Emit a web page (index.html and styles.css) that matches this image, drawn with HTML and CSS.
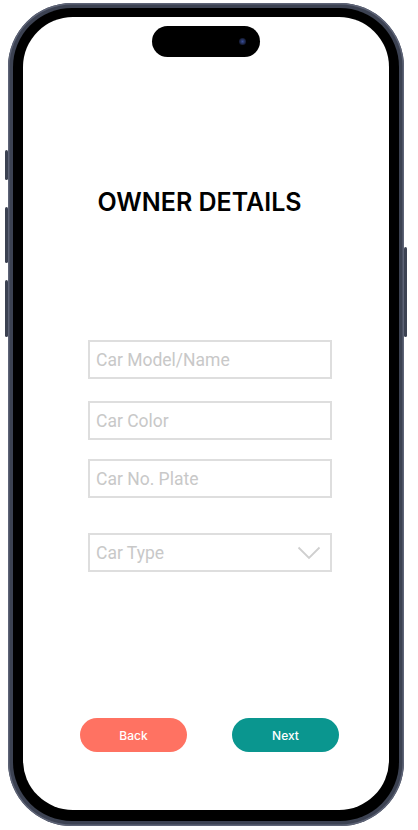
FILE: index.html
```html
<!DOCTYPE html>
<html lang="en">
<head>
    <meta charset="UTF-8">
    <meta name="viewport" content="width=device-width, initial-scale=1.0">
    <title>Owner Details</title>
    <link rel="stylesheet" href="styles.css">
</head>
<body>

<div class="phone">
    <span class="side-btn left-1"></span>
    <span class="side-btn left-2"></span>
    <span class="side-btn left-3"></span>
    <span class="side-btn right-1"></span>

    <div class="bezel">
        <div class="screen">
            <div class="island"><span class="camera"></span></div>

            <h1>OWNER DETAILS</h1>

            <form class="car-form">
                <input type="text" class="field" placeholder="Car Model/Name">
                <input type="text" class="field field-color" placeholder="Car Color">
                <input type="text" class="field field-plate" placeholder="Car No. Plate">

                <div class="select-wrap">
                    <select class="field">
                        <option>Car Type</option>
                        <option>Sedan</option>
                        <option>SUV</option>
                        <option>Hatchback</option>
                    </select>
                    <svg class="chevron" width="24" height="14" viewBox="0 0 24 14">
                        <path d="M1.5 1.5 L12 12 L22.5 1.5" fill="none" stroke="#cfcfcf" stroke-width="1.8"/>
                    </svg>
                </div>

                <div class="actions">
                    <button type="button" class="btn btn-back">Back</button>
                    <button type="submit" class="btn btn-next">Next</button>
                </div>
            </form>
        </div>
    </div>
</div>

</body>
</html>
```

FILE: styles.css
```css
body { margin: 0; background: #fff; font-family: Inter, "Liberation Sans", sans-serif; }

/* device frame */
.phone {
    position: relative;
    width: 396px;
    height: 823px;
    margin: 3px 0 0 8px;
    padding: 5px;
    box-sizing: border-box;
    border-radius: 64px;
    background: #3c4252;
    box-shadow: inset 0 0 0 1.5px #5d6376;
}
.bezel {
    height: 100%;
    padding: 9px 10px 11px 10px;
    box-sizing: border-box;
    border-radius: 59px;
    background: #000;
}
.screen {
    height: 100%;
    border-radius: 50px;
    background: #fff;
    overflow: hidden;
    display: flex;
    flex-direction: column;
}

.side-btn { position: absolute; width: 3px; background: #3c4252; border-radius: 2px; }
.left-1 { left: -3px; top: 147px; height: 30px; }
.left-2 { left: -3px; top: 204px; height: 56px; }
.left-3 { left: -3px; top: 277px; height: 57px; }
.right-1 { right: -3px; top: 244px; height: 90px; }

.island {
    position: relative;
    align-self: center;
    width: 108px;
    height: 31px;
    margin-top: 9px;
    border-radius: 16px;
    background: #000;
}
.camera {
    position: absolute;
    left: 87px;
    top: 12px;
    width: 7px;
    height: 7px;
    border-radius: 50%;
    background: radial-gradient(circle, #3a4f9a 0, #18203d 60%, #0b0e1a 100%);
}

h1 {
    margin: 133px 13px 0 0;
    font-family: Inter, "Liberation Sans", sans-serif;
    font-size: 25px;
    line-height: 24px;
    font-weight: 600;
    text-align: center;
    color: #000;
}

/* form */
.car-form { display: flex; flex-direction: column; margin-top: 126px; }
.field {
    display: block;
    width: 244px;
    height: 39px;
    margin-left: 65px;
    padding: 0 6px;
    box-sizing: border-box;
    border: 2px solid #dedede;
    border-radius: 0;
    background: #fff;
    font-family: Roboto, "Liberation Sans", sans-serif;
    font-size: 17.5px;
    font-weight: 400;
    color: #555;
    outline: none;
}
.field::placeholder { color: #c8c8c8; }
.field-color { margin-top: 22px; }
.field-plate { margin-top: 19px; }

.select-wrap { position: relative; margin-top: 35px; }
.select-wrap select { appearance: none; -webkit-appearance: none; color: #c8c8c8; }
.chevron { position: absolute; left: 274px; top: 13px; pointer-events: none; }

.actions { display: flex; gap: 45px; margin: 146px 0 0 57px; }
.btn {
    width: 107px;
    height: 34px;
    border: none;
    border-radius: 17px;
    color: #fff;
    font-family: Inter, "Liberation Sans", sans-serif;
    font-size: 12px;
    font-weight: 500;
    cursor: pointer;
}
.btn-back { background: #ff7262; }
.btn-next { background: #0a968f; }
```
